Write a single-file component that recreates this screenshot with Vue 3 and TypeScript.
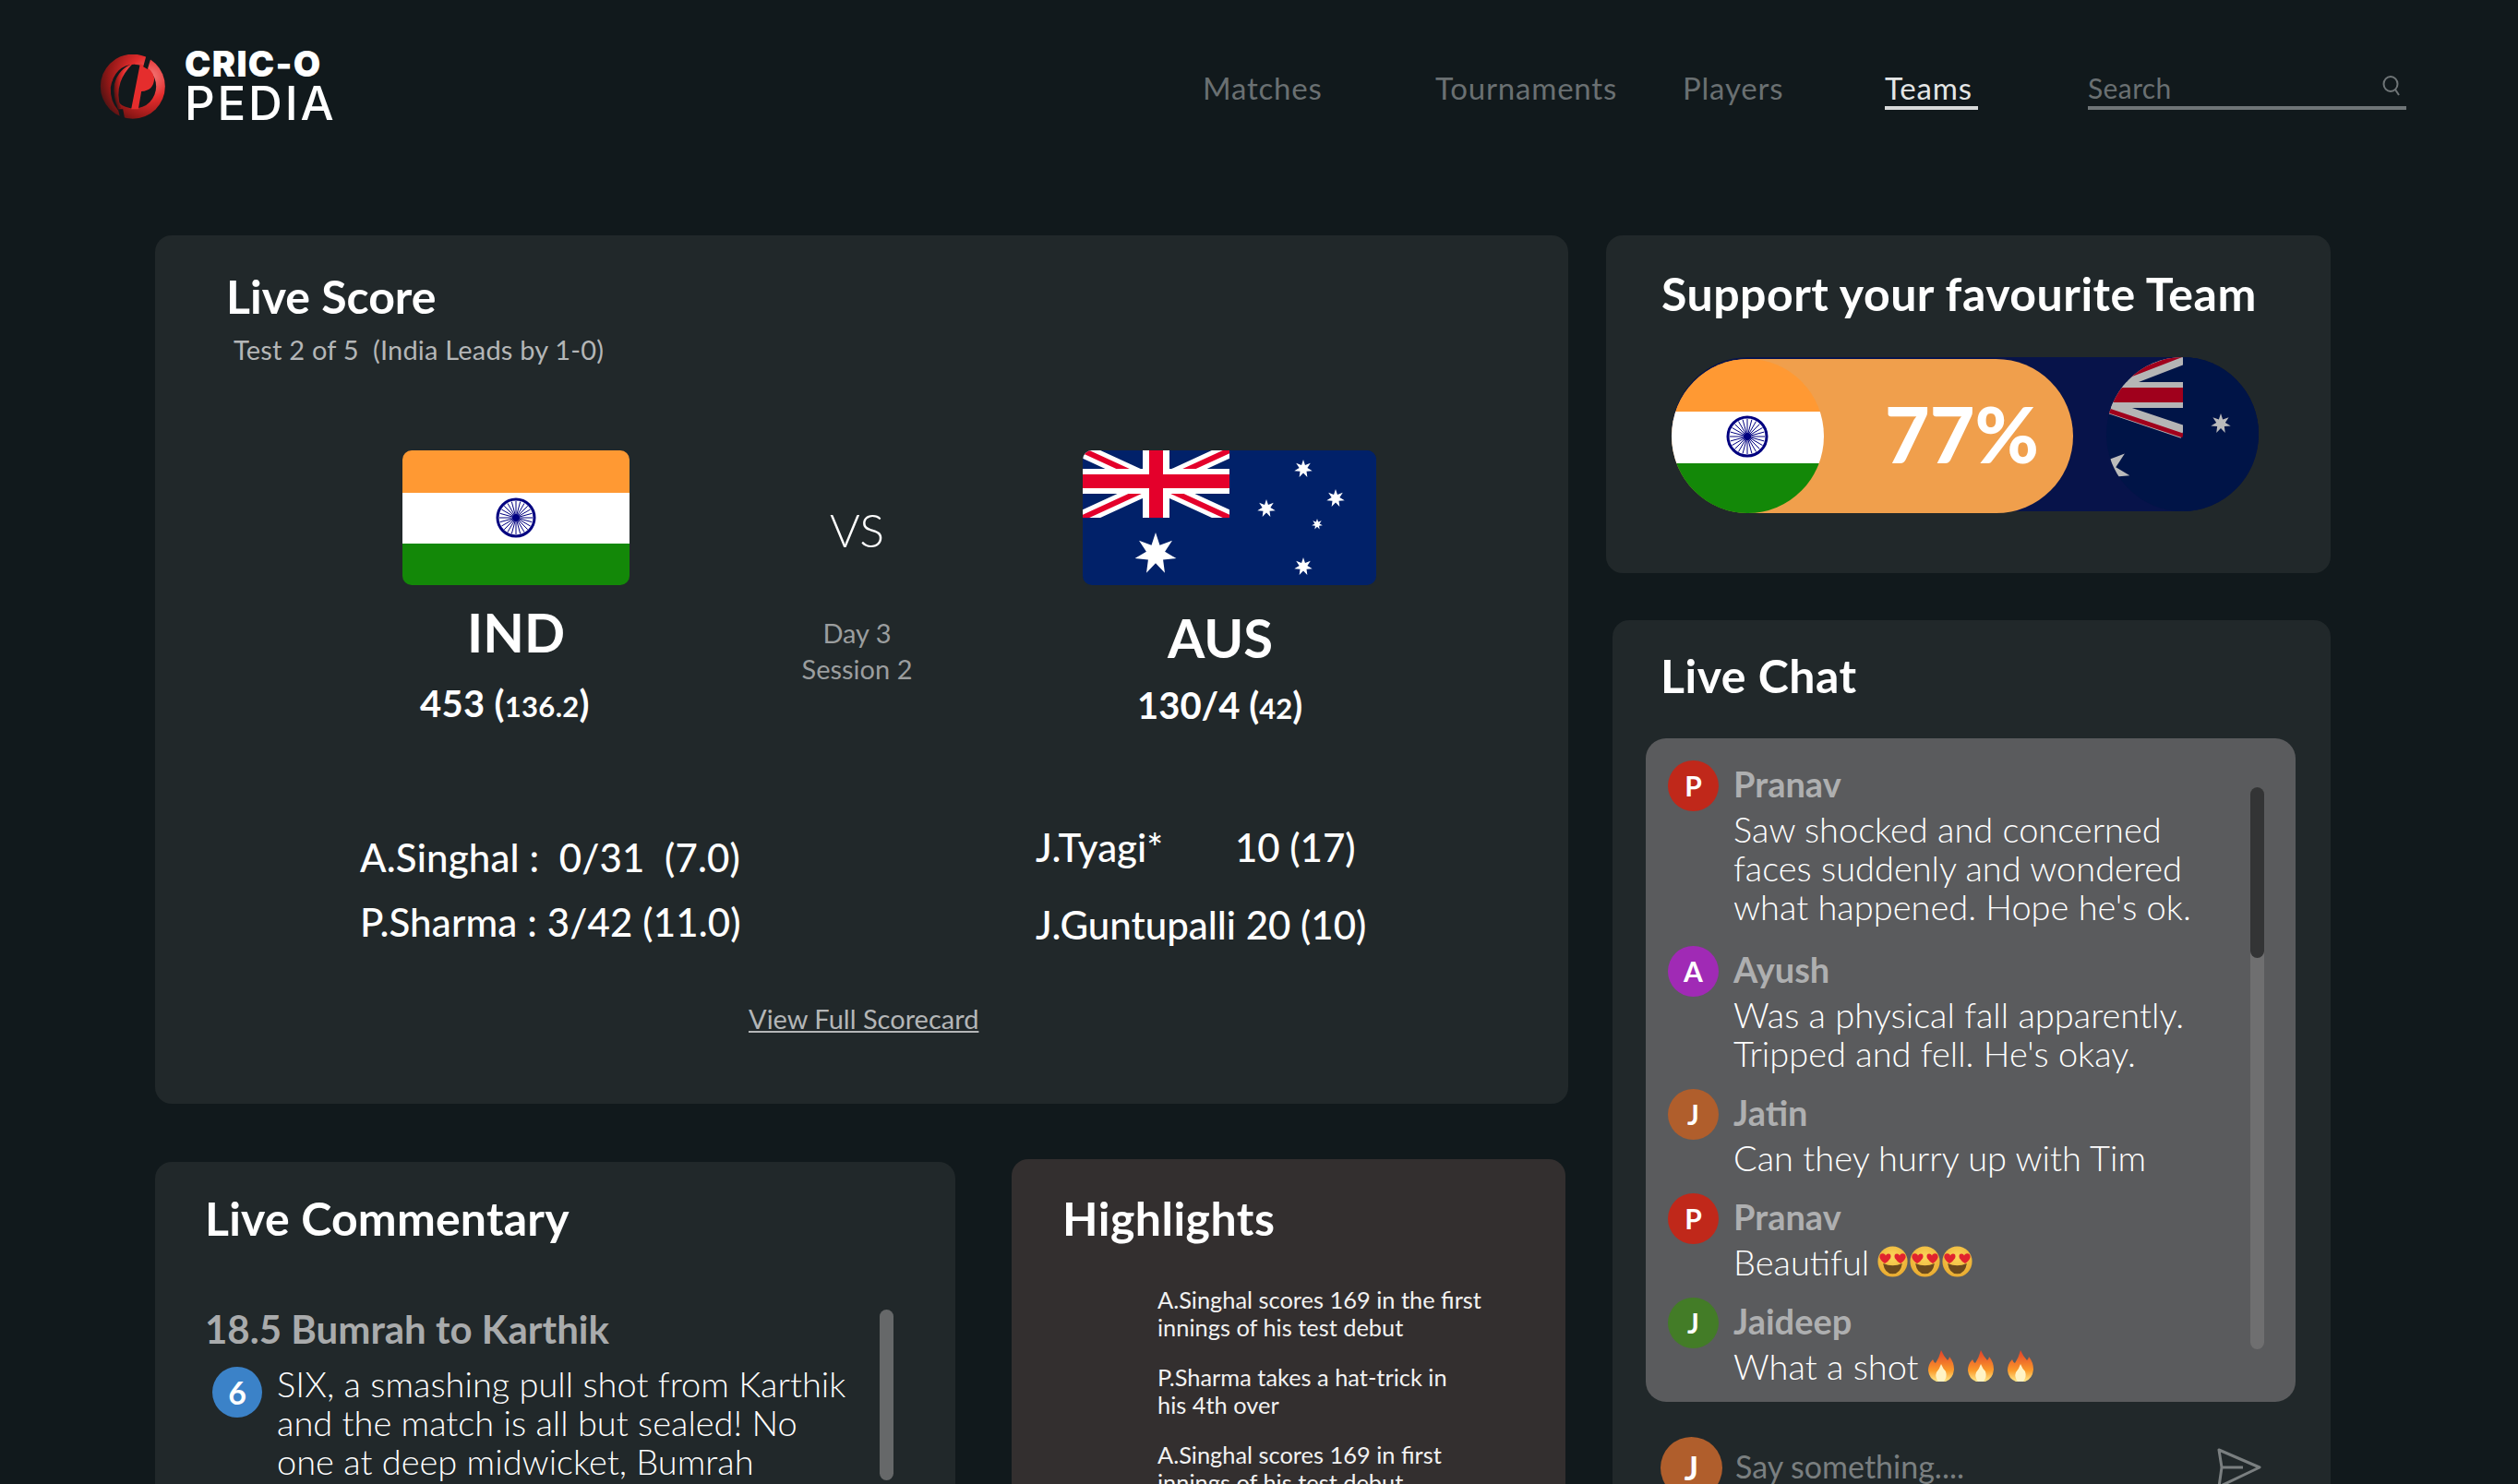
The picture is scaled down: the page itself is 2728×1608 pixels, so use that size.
<template>
  <div class="page">
    <svg class="defs" width="0" height="0" aria-hidden="true">
      <defs>
        <radialGradient id="logoRed" cx="0.78" cy="0.35" r="0.95">
          <stop offset="0" stop-color="#f47a7a" />
          <stop offset="0.35" stop-color="#e32c2c" />
          <stop offset="0.7" stop-color="#8f1716" />
          <stop offset="1" stop-color="#231011" />
        </radialGradient>
        <radialGradient id="faceFill" cx="0.5" cy="0.35" r="0.7">
          <stop offset="0" stop-color="#fbd75b" />
          <stop offset="1" stop-color="#e8a72c" />
        </radialGradient>
        <linearGradient id="flameFill" x1="0" y1="1" x2="0" y2="0">
          <stop offset="0" stop-color="#ffe98a" />
          <stop offset="0.35" stop-color="#fb9a2a" />
          <stop offset="1" stop-color="#e2402a" />
        </linearGradient>
        <symbol id="heartEyes" viewBox="0 0 36 36">
          <ellipse cx="18" cy="18" rx="17" ry="17.5" fill="url(#faceFill)" />
          <path d="M7 20 Q18 25 29 20 Q27 32 18 32 Q9 32 7 20 Z" fill="#6b4a1d" />
          <path d="M3 13 Q3 8 8 9 Q10 10 10 11 Q11 9 13 9 Q17 9 15.500 14 Q13 18 9 20 Q4 17 3 13 Z" fill="#e1232e" />
          <path d="M33 13 Q33 8 28 9 Q26 10 26 11 Q25 9 23 9 Q19 9 20.500 14 Q23 18 27 20 Q32 17 33 13 Z" fill="#e1232e" />
        </symbol>
        <symbol id="flame" viewBox="0 0 28 34">
          <path d="M14 0 Q17 7 21 11 Q23 9 23 7 Q28 13 28 21 Q27 31 19 34 L9 34 Q1 31 0 22 Q0 15 5 10 Q6 13 8 14 Q12 8 14 0 Z" fill="url(#flameFill)" />
          <path d="M14 15 Q16 20 19 23 Q21 29 17 34 L11 34 Q7 29 9 24 Q12 21 14 15 Z" fill="#fff3c4" />
        </symbol>
      </defs>
    </svg>

    <header class="topbar">
      <div class="brand">
        <svg class="logo" viewBox="145 118 215 210">
          <circle cx="252" cy="222" r="105" fill="url(#logoRed)" />
          <circle cx="256" cy="222" r="72" fill="#11191c" />
          <path d="M258 150 Q190 162 180 225 Q178 270 205 300 Q196 250 208 205 Q220 170 258 150 Z" fill="#11191c" />
          <path d="M252 148 Q205 165 192 215 Q186 255 205 296 L214 292 Q198 250 212 208 Q222 178 252 148 Z" fill="url(#logoRed)" />
          <path d="M276 148 L247 296 L270 296 L280 238 Q320 236 322 196 Q318 165 276 148 Z" fill="#e52d2d" />
          <path d="M296 122 L286 158 L300 166 L312 126 Z" fill="#11191c" />
          <path d="M204 296 L212 328 L226 328 L220 296 Z" fill="#11191c" />
        </svg>
        <div class="wordmark">
          <span class="cric">CRIC-O</span>
          <span class="pedia">PEDIA</span>
        </div>
      </div>
      <nav class="nav">
        <a v-for="item in navItems" :key="item.label" class="nav-link" :class="{ active: item.active }" :style="{ width: item.width + 'px' }">
          <span>{{ item.label }}</span>
        </a>
        <div class="search">
          <span>Search</span>
          <svg class="search-icon" viewBox="0 0 20 22" fill="none" stroke="#6f7577" stroke-width="2">
            <ellipse cx="9" cy="9" rx="7.500" ry="8" />
            <path d="M14 15 L18 21" />
          </svg>
        </div>
      </nav>
    </header>

    <main class="board">
      <div class="left">
        <section class="card score">
          <h2 class="score-title">Live Score</h2>
          <p class="subtitle">Test 2 of 5 &nbsp;(India Leads by 1-0)</p>

          <div class="teams">
            <div class="team ind">
              <svg class="flag" width="246" height="146" viewBox="0 0 246 146">
                <rect width="246" height="46" fill="#ff9933" />
                <rect y="46" width="246" height="55" fill="#fff" />
                <rect y="101" width="246" height="45" fill="#138808" />
                <g transform="translate(123 73)" stroke="#000080" fill="none">
                  <circle r="20" stroke-width="3" />
                  <line v-for="a in spokes" :key="a" :x2="18 * Math.cos(a)" :y2="18 * Math.sin(a)" stroke-width="1" />
                  <circle r="4" fill="#000080" stroke="none" />
                </g>
              </svg>
              <div class="code">IND</div>
              <div class="total">453 <span class="paren">(<small>136.2</small>)</span></div>
            </div>

            <div class="mid">
              <div class="vs">VS</div>
              <div class="day">Day 3<br />Session 2</div>
            </div>

            <div class="team aus">
              <svg class="flag" width="318" height="146" viewBox="0 0 318 146">
                <rect width="318" height="146" fill="#012169" />
                <g>
                  <path d="M0 0 L159 73 M159 0 L0 73" stroke="#fff" stroke-width="16" />
                  <path d="M0 0 L159 73 M159 0 L0 73" stroke="#e4002b" stroke-width="6" />
                  <rect x="65" width="29" height="73" fill="#fff" />
                  <rect y="20" width="159" height="27" fill="#fff" />
                  <rect x="72" width="15" height="73" fill="#e4002b" />
                  <rect y="26" width="159" height="15" fill="#e4002b" />
                </g>
                <rect x="159" width="159" height="73" fill="#012169" />
                <rect y="73" width="159" height="10" fill="#012169" />
                <polygon v-for="s in ausStars" :key="s.x" :points="starPoints(s.x, s.y, s.r)" fill="#fff" />
              </svg>
              <div class="code">AUS</div>
              <div class="total">130/4 <span class="paren">(<small>42</small>)</span></div>
            </div>
          </div>

          <div class="stats">
            <div class="bowlers">
              <div>A.Singhal : &nbsp;0/31 &nbsp;(7.0)</div>
              <div>P.Sharma : 3/42 (11.0)</div>
            </div>
            <div class="batters">
              <div class="batter"><span class="bat-name">J.Tyagi*</span><span>10 (17)</span></div>
              <div class="batter">J.Guntupalli 20 (10)</div>
            </div>
          </div>

          <a class="full-link">View Full Scorecard</a>
        </section>

        <div class="lower">
          <section class="card commentary">
            <h2 class="title comm-title">Live Commentary</h2>
            <h3 class="ball">18.5 Bumrah to Karthik</h3>
            <div class="ball-row">
              <span class="run">6</span>
              <p>SIX, a smashing pull shot from Karthik and the match is all but sealed! No one at deep midwicket, Bumrah</p>
            </div>
            <div class="comm-track"></div>
          </section>

          <section class="card highlights">
            <h2 class="title">Highlights</h2>
            <ul>
              <li>A.Singhal scores 169 in the first innings of his test debut</li>
              <li>P.Sharma takes a hat-trick in<br />his 4th over</li>
              <li>A.Singhal scores 169 in first innings of his test debut</li>
            </ul>
          </section>
        </div>
      </div>

      <div class="right">
        <section class="card support">
          <h2 class="title">Support your favourite Team</h2>
          <div class="pill">
            <svg class="pill-flag pill-aus" width="165" height="167" viewBox="0 0 165 167">
              <defs><clipPath id="ausClip"><ellipse cx="82.500" cy="83.500" rx="82.500" ry="83.500" /></clipPath></defs>
              <g clip-path="url(#ausClip)">
                <rect width="165" height="167" fill="#001447" />
                <path d="M83 1 L0 33 M83 81 L0 53" stroke="#b5b5b5" stroke-width="14" />
                <path d="M83 -3 L0 29 M83 85 L0 57" stroke="#a0001c" stroke-width="5" />
                <rect y="27" width="83" height="28" fill="#b5b5b5" />
                <rect y="33" width="83" height="16" fill="#a0001c" />
                <rect x="83" width="82" height="90" fill="#001447" />
                <polygon :points="starPoints(124, 72, 11)" fill="#bbb" />
                <polygon :points="starPoints(-2, 122, 28)" fill="#bbb" />
              </g>
            </svg>
            <div class="pill-fill">
              <svg class="pill-flag" width="165" height="167" viewBox="0 0 165 167">
                <defs><clipPath id="indClip"><ellipse cx="82.500" cy="83.500" rx="82.500" ry="83.500" /></clipPath></defs>
                <g clip-path="url(#indClip)">
                  <rect width="165" height="57" fill="#ff9933" />
                  <rect y="57" width="165" height="56" fill="#fff" />
                  <rect y="113" width="165" height="54" fill="#138808" />
                  <g transform="translate(82 84)" stroke="#000080" fill="none">
                    <circle r="21" stroke-width="3" />
                    <line v-for="a in spokes" :key="a" :x2="19 * Math.cos(a)" :y2="19 * Math.sin(a)" stroke-width="1" />
                    <circle r="4" fill="#000080" stroke="none" />
                  </g>
                </g>
              </svg>
              <span class="percent">77%</span>
            </div>
          </div>
        </section>

        <section class="card chat">
          <h2 class="title">Live Chat</h2>
          <div class="chat-box">
            <div v-for="(m, i) in messages" :key="i" class="msg">
              <span class="avatar" :style="{ background: m.color }">{{ m.name[0] }}</span>
              <div class="msg-body">
                <div class="msg-name">{{ m.name }}</div>
                <div class="msg-text">
                  {{ m.text }}
                  <span v-if="m.emoji === 'hearts'" class="emojis hearts">
                    <svg v-for="n in 3" :key="n" width="35" height="34"><use href="#heartEyes" /></svg>
                  </span>
                  <span v-if="m.emoji === 'fire'" class="emojis fires">
                    <svg v-for="n in 3" :key="n" width="28" height="34"><use href="#flame" /></svg>
                  </span>
                </div>
              </div>
            </div>
            <div class="chat-track"><div class="chat-thumb"></div></div>
          </div>
          <div class="say">
            <span class="avatar me">J</span>
            <span class="say-text">Say something....</span>
            <svg class="send" width="48" height="44" viewBox="0 0 48 44" fill="none" stroke="#7a7f80" stroke-width="3" stroke-linejoin="round">
              <path d="M2 2 L46 21 L2 42 L5 21 Z M5 21 L28 21" />
            </svg>
          </div>
        </section>
      </div>
    </main>
  </div>
</template>

<script setup lang="ts">
type Emoji = 'hearts' | 'fire' | undefined;

const navItems = [
  { label: 'Matches', width: 252 },
  { label: 'Tournaments', width: 268 },
  { label: 'Players', width: 219 },
  { label: 'Teams', width: 220, active: true }
];

const messages: { name: string; color: string; text: string; emoji?: Emoji }[] = [
  { name: 'Pranav', color: '#c0281a', text: "Saw shocked and concerned faces suddenly and wondered what happened. Hope he's ok." },
  { name: 'Ayush', color: '#a02ab5', text: "Was a physical fall apparently. Tripped and fell. He's okay." },
  { name: 'Jatin', color: '#b05e2c', text: 'Can they hurry up with Tim' },
  { name: 'Pranav', color: '#c0281a', text: 'Beautiful', emoji: 'hearts' },
  { name: 'Jaideep', color: '#437c27', text: 'What a shot', emoji: 'fire' }
];

const spokes = Array.from({ length: 24 }, (_, i) => (i * Math.PI) / 12);

const ausStars = [
  { x: 79, y: 112, r: 23 },
  { x: 239, y: 20, r: 10 },
  { x: 274, y: 52, r: 10 },
  { x: 199, y: 63, r: 10 },
  { x: 254, y: 80, r: 6 },
  { x: 239, y: 126, r: 10 }
];

function starPoints(cx: number, cy: number, r: number): string {
  const pts: string[] = [];
  for (let i = 0; i < 14; i++) {
    const rad = i % 2 === 0 ? r : r * 0.45;
    const a = (i * Math.PI) / 7 - Math.PI / 2;
    pts.push(`${cx + rad * Math.cos(a)},${cy + rad * Math.sin(a)}`);
  }
  return pts.join(' ');
}
</script>

<style>
html,
body {
  margin: 0;
  background: #11191c;
}
</style>

<style scoped>
.page {
  width: 2728px;
  height: 1608px;
  overflow: hidden;
  background: #11191c;
  color: #fff;
  font-family: "Lato", "Noto Sans", sans-serif;
}

.defs {
  position: absolute;
}

h2,
h3,
p,
ul {
  margin: 0;
  padding: 0;
}

.topbar {
  height: 255px;
  box-sizing: border-box;
  padding: 50px 0 0 108px;
  display: flex;
  align-items: flex-start;
}

.brand {
  display: flex;
  align-items: center;
  gap: 20px;
  width: 1195px;
}

.logo {
  width: 72px;
  height: 70px;
  margin-top: 2px;
}

.wordmark {
  display: flex;
  flex-direction: column;
  font-family: "Inter", sans-serif;
}

.cric {
  font-size: 38px;
  font-weight: 900;
  line-height: 38px;
  letter-spacing: 1.3px;
}

.pedia {
  font-size: 51px;
  font-weight: 500;
  line-height: 48px;
  letter-spacing: 2.8px;
}

.nav {
  display: flex;
  align-items: flex-start;
  font-size: 33px;
  letter-spacing: 0.8px;
  color: #6a7072;
}

.nav-link span {
  display: inline-block;
  height: 65px;
  line-height: 91px;
  box-sizing: content-box;
}

.nav-link.active {
  color: #e4e6e6;
}

.nav-link.active span {
  padding-right: 6px;
  border-bottom: 4px solid #d8dada;
}

.search {
  position: relative;
  width: 345px;
  height: 65px;
  line-height: 90px;
  font-size: 30px;
  letter-spacing: 0.4px;
  border-bottom: 4px solid #6f7577;
}

.search-icon {
  position: absolute;
  right: 6px;
  top: 32px;
  width: 20px;
  height: 22px;
}

.board {
  display: grid;
  grid-template-columns: 1531px 785px;
  column-gap: 41px;
  padding-left: 168px;
}

.card {
  background: #21282a;
  border-radius: 18px;
}

.title {
  font-size: 50px;
  font-weight: 700;
  line-height: 60px;
  letter-spacing: 0.5px;
}

.comm-title {
  letter-spacing: 0.2px;
}

.score {
  height: 941px;
  box-sizing: border-box;
  padding-top: 36px;
}

.score-title {
  font-size: 50px;
  font-weight: 700;
  line-height: 60px;
  margin-left: 77px;
}

.subtitle {
  margin: 10px 0 0 85px;
  font-size: 29px;
  letter-spacing: 0.2px;
  line-height: 36px;
  color: #b4b6b7;
}

.teams {
  display: grid;
  grid-template-columns: 246px 1fr 318px;
  margin: 91px 208px 0 268px;
}

.team {
  display: flex;
  flex-direction: column;
}

.flag {
  border-radius: 10px;
  display: block;
}

.code {
  font-size: 58px;
  font-weight: 700;
  line-height: 70px;
  text-align: center;
  margin-top: 16px;
}

.ind .total {
  margin-left: 19px;
  margin-top: 17px;
  letter-spacing: 0.3px;
}

.aus .code {
  margin-top: 22px;
  margin-right: 20px;
}

.aus .total {
  margin-left: 59px;
  margin-top: 13px;
}

.total {
  font-size: 40px;
  font-weight: 700;
  line-height: 50px;
  white-space: nowrap;
}

.paren small {
  font-size: 31px;
}

.mid {
  text-align: center;
  padding-left: 2px;
}

.vs {
  font-size: 50px;
  font-weight: 300;
  line-height: 60px;
  margin-top: 56px;
}

.day {
  font-size: 29px;
  line-height: 39px;
  color: #9b9e9f;
  margin-top: 62px;
}

.stats {
  display: grid;
  grid-template-columns: 732px 1fr;
  margin: 96px 0 0 222px;
  font-size: 42px;
  font-weight: 500;
}

.bowlers div {
  line-height: 70px;
  letter-spacing: 0.15px;
}

.bowlers {
  margin-top: 6px;
}

.batters {
  margin-top: 5px;
}

.batter {
  line-height: 50px;
  white-space: nowrap;
}

.batter + .batter {
  margin-top: 34px;
}

.bat-name {
  display: inline-block;
  width: 216px;
}

.full-link {
  display: block;
  margin: 52px 0 0 643px;
  font-size: 29px;
  line-height: 36px;
  color: #b4b6b7;
  text-decoration: underline;
}

.lower {
  display: grid;
  grid-template-columns: 867px 600px;
  column-gap: 61px;
  margin-top: 63px;
}

.commentary {
  position: relative;
  height: 420px;
  box-sizing: border-box;
  padding: 31px 0 0 54px;
}

.ball {
  margin-top: 65px;
  font-size: 42px;
  font-weight: 700;
  line-height: 50px;
  color: #a9abac;
}

.ball-row {
  display: flex;
  gap: 16px;
  margin: 6px 0 0 8px;
}

.ball-row p {
  width: 622px;
  margin-top: 7px;
  font-size: 38px;
  font-weight: 300;
  line-height: 42px;
}

.run {
  flex: none;
  width: 54px;
  height: 55px;
  margin-top: 10px;
  border-radius: 50%;
  background: #3b82c8;
  font-size: 34px;
  font-weight: 700;
  line-height: 55px;
  text-align: center;
}

.comm-track {
  position: absolute;
  left: 785px;
  top: 160px;
  width: 15px;
  height: 185px;
  border-radius: 8px;
  background: #666869;
}

.highlights {
  height: 420px;
  margin-top: -3px;
  background: #332f2f;
  padding: 34px 0 0 55px;
  box-sizing: border-box;
}

.highlights ul {
  list-style: none;
  margin: 43px 0 0 103px;
  width: 352px;
  font-size: 25.400px;
  line-height: 30px;
  color: #f2f2f2;
}

.highlights li + li {
  margin-top: 24px;
}

.support {
  height: 366px;
  box-sizing: border-box;
  padding: 33px 0 0 60px;
}

.pill {
  position: relative;
  width: 636px;
  height: 167px;
  margin: 39px 0 0 11px;
  border-radius: 84px;
  background: #07134a;
}

.pill-aus {
  position: absolute;
  right: 0;
  top: 0;
}

.pill-fill {
  position: relative;
  display: flex;
  align-items: center;
  top: 2px;
  width: 435px;
  height: 167px;
  border-radius: 84px;
  background: #f09f4c;
}

.pill-flag {
  display: block;
}

.percent {
  position: absolute;
  left: 231px;
  top: 26px;
  font-size: 84px;
  font-weight: 900;
  line-height: 110px;
}

.chat {
  height: 990px;
  margin: 51px 0 0 7px;
  padding: 30px 0 0 52px;
  box-sizing: border-box;
}

.chat-box {
  position: relative;
  box-sizing: border-box;
  width: 704px;
  height: 719px;
  margin: 38px 0 0 -16px;
  padding: 24px 0 0 24px;
  border-radius: 22px;
  background: #5a5b5d;
}

.msg {
  display: flex;
  gap: 16px;
  margin-bottom: 18px;
}

.msg:first-child {
  margin-bottom: 22px;
}

.avatar {
  flex: none;
  width: 55px;
  height: 55px;
  border-radius: 50%;
  font-size: 30px;
  font-weight: 700;
  line-height: 55px;
  text-align: center;
}

.msg-body {
  width: 530px;
}

.msg-name {
  font-size: 38px;
  font-weight: 700;
  line-height: 50px;
  margin-bottom: 3px;
  color: #aeafb0;
}

.msg-text {
  font-size: 38px;
  font-weight: 300;
  line-height: 42px;
  display: flex;
  flex-wrap: wrap;
  align-items: center;
}

.emojis {
  display: inline-flex;
  margin-left: 8px;
  height: 42px;
  align-items: center;
}

.fires {
  margin-left: 10px;
  gap: 15px;
}

.chat-track {
  position: absolute;
  left: 655px;
  top: 53px;
  width: 15px;
  height: 609px;
  border-radius: 8px;
  background: #6f6f70;
}

.chat-thumb {
  width: 15px;
  height: 185px;
  border-radius: 8px;
  background: #333435;
}

.say {
  display: flex;
  align-items: center;
  margin: 38px 0 0 0;
  height: 67px;
}

.me {
  width: 67px;
  height: 67px;
  line-height: 67px;
  background: #b05e2c;
  font-size: 36px;
}

.say-text {
  margin-left: 14px;
  margin-top: -4px;
  font-size: 34px;
  color: #7a7f80;
  width: 522px;
}

.send {
  flex: none;
}
</style>
